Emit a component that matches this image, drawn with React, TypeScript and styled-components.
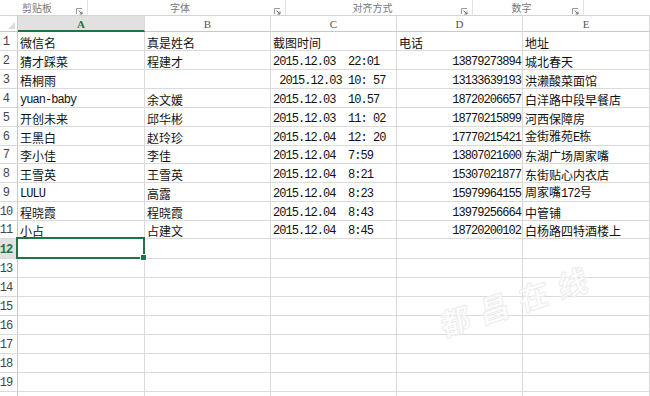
import React from 'react';
import styled, { createGlobalStyle, css } from 'styled-components';

const GREEN = '#217346';
const GRID = '#dadada';
const HEAD_LINE = '#c9c9c9';
const COLS = '18px 127px 126px 126px 126px 127px';

const GlobalStyle = createGlobalStyle`
  html, body { margin: 0; padding: 0; background: #fff; overflow: hidden; }
  #root { width: 650px; height: 396px; }
`;

const Page = styled.div`
  position: relative;
  width: 650px;
  height: 396px;
  overflow: hidden;
  background: #fff;
  font-family: "Noto Sans CJK SC", sans-serif;
`;

/* ---------- ribbon group labels ---------- */
const Ribbon = styled.div`
  display: flex;
  height: 15px;
  border-bottom: 1px solid #d4d4d4;
  background: #fff;
`;

const RibbonGroup = styled.div<{ $w: number; $last?: boolean }>`
  display: flex;
  width: ${p => p.$w}px;
  flex: ${p => (p.$last ? '1' : 'none')};
  border-right: ${p => (p.$last ? 'none' : '1px solid #e2e2e2')};
  box-sizing: border-box;
`;

const RibbonLabel = styled.div`
  flex: 1;
  text-align: center;
  font-size: 10px;
  line-height: 14px;
  padding-top: 1px;
  color: #777;
`;

const Launcher = styled.div`
  width: 13px;
  display: flex;
  align-items: flex-start;
  padding-top: 8px;
  padding-left: 2px;
  box-sizing: border-box;
`;

const LauncherIcon = () => (
  <svg width="7" height="7" viewBox="0 0 7 7">
    <path d="M0.5 6V0.5H6" fill="none" stroke="#9a9a9a" strokeWidth="1" />
    <path d="M2.5 2.5L6 6M6 3.5V6H3.5" fill="none" stroke="#6f6f6f" strokeWidth="1" />
  </svg>
);

/* ---------- sheet grid ---------- */
const Sheet = styled.div`
  display: flex;
  flex-direction: column;
`;

const Row = styled.div<{ $h: number }>`
  display: grid;
  grid-template-columns: ${COLS};
  height: ${p => p.$h}px;
  flex: none;
`;

const Corner = styled.div`
  position: relative;
  border-right: 1px solid ${HEAD_LINE};
  border-bottom: 1px solid ${HEAD_LINE};
  background: #fff;
  &::after {
    content: '';
    position: absolute;
    right: 2px;
    bottom: 2px;
    width: 0;
    height: 0;
    border-left: 7px solid transparent;
    border-bottom: 7px solid #dcdcdc;
  }
`;

const ColHead = styled.div<{ $active?: boolean }>`
  display: flex;
  align-items: center;
  justify-content: center;
  font-family: "Liberation Serif", "DejaVu Serif", serif;
  font-size: 11px;
  line-height: 12px;
  color: #555;
  background: #fff;
  border-right: 1px solid ${GRID};
  border-bottom: 1px solid ${HEAD_LINE};
  ${p =>
    p.$active &&
    css`
      background: #e1e1e1;
      color: ${GREEN};
      font-weight: bold;
      border-bottom: 2px solid ${GREEN};
      padding-top: 1px;
    `}
`;

const RowHead = styled.div<{ $active?: boolean }>`
  display: flex;
  align-items: flex-end;
  justify-content: center;
  padding-right: 5px;
  padding-bottom: 1px;
  font-family: "Liberation Mono", "DejaVu Sans Mono", monospace;
  font-size: 12px;
  letter-spacing: -0.9px;
  line-height: 14px;
  color: #444;
  background: #fff;
  border-right: 1px solid ${HEAD_LINE};
  border-bottom: 1px solid ${GRID};
  ${p =>
    p.$active &&
    css`
      background: #e1e1e1;
      color: ${GREEN};
      font-weight: bold;
    `}
`;

const Cell = styled.div<{ $right?: boolean; $selected?: boolean }>`
  position: relative;
  display: flex;
  align-items: flex-end;
  justify-content: ${p => (p.$right ? 'flex-end' : 'flex-start')};
  padding: 0 ${p => (p.$right ? '1px' : '2px')} 0 2px;
  font-size: 12px;
  line-height: 14px;
  color: #111;
  white-space: pre;
  overflow: visible;
  border-right: 1px solid ${GRID};
  border-bottom: 1px solid ${GRID};
  ${p =>
    p.$selected &&
    css`
      &::after {
        content: '';
        position: absolute;
        left: -2px;
        top: -2px;
        right: -1px;
        bottom: -1px;
        border: 2px solid ${GREEN};
        pointer-events: none;
      }
      &::before {
        content: '';
        position: absolute;
        right: -3px;
        bottom: -3px;
        width: 5px;
        height: 5px;
        background: ${GREEN};
        border: 1px solid #fff;
        z-index: 2;
      }
    `}
`;

const Latin = styled.span`
  font-family: "Liberation Mono", "DejaVu Sans Mono", monospace;
  font-size: 12px;
  letter-spacing: -0.95px;
`;

const Watermark = styled.div`
  position: absolute;
  left: 434px;
  top: 284px;
  width: 170px;
  text-align: center;
  font-family: "Noto Sans CJK SC", sans-serif;
  font-weight: 700;
  font-size: 30px;
  line-height: 30px;
  letter-spacing: 11px;
  color: rgba(255, 255, 255, 0.7);
  -webkit-text-stroke: 1px #ececec;
  transform: rotate(-18deg) skewX(-8deg);
  pointer-events: none;
`;

const Mixed = ({ text }: { text: string }) => {
  const parts = text.split(/([\x00-\x7F]+)/);
  return (
    <span>
      {parts.map((p, i) =>
        p === '' ? null : /^[\x00-\x7F]+$/.test(p) ? <Latin key={i}>{p}</Latin> : <span key={i}>{p}</span>
      )}
    </span>
  );
};

const DATA: string[][] = [
  ['微信名', '真是姓名', '截图时间', '电话', '地址'],
  ['猜才踩菜', '程建才', '2015.12.03  22:01', '13879273894', '城北春天'],
  ['梧桐雨', '', ' 2015.12.03 10: 57', '13133639193', '洪濑酸菜面馆'],
  ['yuan-baby', '余文媛', '2015.12.03  10.57', '18720206657', '白洋路中段早餐店'],
  ['开创未来', '邱华彬', '2015.12.03  11: 02', '18770215899', '河西保障房'],
  ['王黑白', '赵玲珍', '2015.12.04  12: 20', '17770215421', '金街雅苑E栋'],
  ['李小佳', '李佳', '2015.12.04  7:59', '13807021600', '东湖广场周家嘴'],
  ['王雪英', '王雪英', '2015.12.04  8:21', '15307021877', '东街贴心内衣店'],
  ['LULU', '高露', '2015.12.04  8:23', '15979964155', '周家嘴172号'],
  ['程晓霞', '程晓霞', '2015.12.04  8:43', '13979256664', '中管铺'],
  ['小占', '占建文', '2015.12.04  8:45', '18720200102', '白杨路四特酒楼上'],
];

const HEIGHTS = [19, 19, 19, 19, 19, 19, 18, 19, 19, 19, 18, 20, 19, 19, 19, 19, 19, 19, 19];

const GROUPS = [
  { label: '剪贴板', w: 88 },
  { label: '字体', w: 198 },
  { label: '对齐方式', w: 187 },
  { label: '数字', w: 111 },
];

const EMPTY = ['', '', '', '', ''];

export default function App() {
  return (
    <Page>
      <GlobalStyle />
      <Ribbon>
        {GROUPS.map(g => (
          <RibbonGroup key={g.label} $w={g.w}>
            <RibbonLabel>{g.label}</RibbonLabel>
            <Launcher>
              <LauncherIcon />
            </Launcher>
          </RibbonGroup>
        ))}
        <RibbonGroup $w={66} $last />
      </Ribbon>
      <Sheet>
        <Row $h={16}>
          <Corner />
          {['A', 'B', 'C', 'D', 'E'].map((c, i) => (
            <ColHead key={c} $active={i === 0}>
              {c}
            </ColHead>
          ))}
        </Row>
        {HEIGHTS.map((h, r) => {
          const vals = DATA[r] || EMPTY;
          return (
            <Row key={r} $h={h}>
              <RowHead $active={r === 11}>{r + 1}</RowHead>
              {vals.map((v, c) => (
                <Cell key={c} $right={c === 3 && r > 0} $selected={r === 11 && c === 0}>
                  <Mixed text={v} />
                </Cell>
              ))}
            </Row>
          );
        })}
        <Row $h={19}>
          <RowHead />
          {EMPTY.map((_, c) => (
            <Cell key={c} />
          ))}
        </Row>
      </Sheet>
      <Watermark>都昌在线</Watermark>
    </Page>
  );
}
